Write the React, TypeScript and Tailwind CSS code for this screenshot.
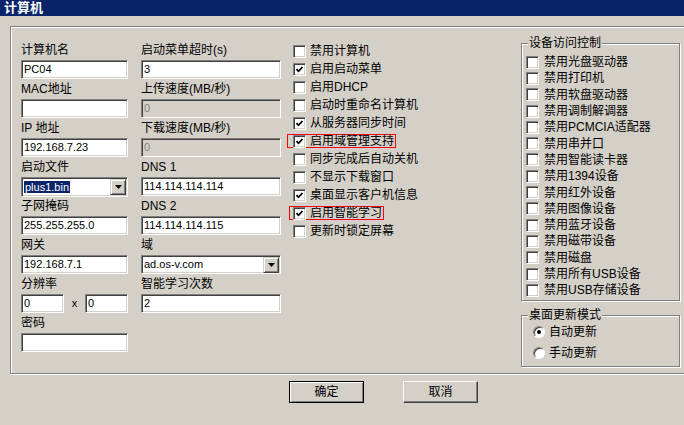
import React from 'react'

const sunken =
  'border border-t-[#808080] border-l-[#808080] border-b-white border-r-white shadow-[inset_1px_1px_0_#404040,inset_-1px_-1px_0_#d4d0c8]'

type FieldProps = {
  label: string
  value?: string
  disabled?: boolean
  select?: boolean
  selected?: boolean
}

const DropArrow = () => (
  <div className="w-[16px] h-[16px] flex items-center justify-center bg-[#d4d0c8] border border-t-[#d4d0c8] border-l-[#d4d0c8] border-b-[#404040] border-r-[#404040] shadow-[inset_1px_1px_0_white,inset_-1px_-1px_0_#808080]">
    <svg width="7" height="4" viewBox="0 0 7 4">
      <path d="M0 0H7L3.5 4Z" fill="black" />
    </svg>
  </div>
)

const Field = ({ label, value = '', disabled, select, selected }: FieldProps) => (
  <div className="flex flex-col">
    <div className="h-[20px] leading-[20px] text-[12px] text-black whitespace-nowrap">{label}</div>
    <div
      className={`h-[19px] flex items-center pl-[2px] pr-[1px] text-[11px] ${sunken} ${
        disabled ? 'bg-[#d4d0c8] text-[#808080]' : 'bg-white text-black'
      }`}
    >
      <span className={`flex-1 leading-[13px] ${selected ? '' : ''}`}>
        {selected ? <span className="bg-[#0a246a] text-white px-[1px]">{value}</span> : value}
      </span>
      {select && <DropArrow />}
    </div>
  </div>
)

const Check = ({ checked }: { checked?: boolean }) => (
  <div className={`w-[13px] h-[13px] shrink-0 bg-white flex items-center justify-center ${sunken}`}>
    {checked && (
      <svg width="9" height="9" viewBox="0 0 9 9">
        <path d="M1.5 4.2L3.5 6.3L7.5 2" stroke="black" strokeWidth="1.8" fill="none" />
      </svg>
    )}
  </div>
)

const Radio = ({ checked }: { checked?: boolean }) => (
  <div className="w-[12px] h-[12px] shrink-0 rounded-full bg-white flex items-center justify-center border border-t-[#808080] border-l-[#808080] border-b-white border-r-white shadow-[inset_1px_1px_0_#404040]">
    {checked && <div className="w-[4px] h-[4px] rounded-full bg-black" />}
  </div>
)

const options: [string, boolean, string?][] = [
  ['禁用计算机', false],
  ['启用启动菜单', true],
  ['启用DHCP', false],
  ['启动时重命名计算机', false],
  ['从服务器同步时间', true],
  ['启用域管理支持', true, '-ml-[6px] pl-[5px] pr-[1px]'],
  ['同步完成后自动关机', false],
  ['不显示下载窗口', false],
  ['桌面显示客户机信息', true],
  ['启用智能学习', true, '-ml-[4px] pl-[3px] pr-[1px]'],
  ['更新时锁定屏幕', false],
]

const devices = [
  '禁用光盘驱动器',
  '禁用打印机',
  '禁用软盘驱动器',
  '禁用调制解调器',
  '禁用PCMCIA适配器',
  '禁用串并口',
  '禁用智能读卡器',
  '禁用1394设备',
  '禁用红外设备',
  '禁用图像设备',
  '禁用蓝牙设备',
  '禁用磁带设备',
  '禁用磁盘',
  '禁用所有USB设备',
  '禁用USB存储设备',
]

export default function App() {
  return (
    <div className="w-[684px] h-[425px] overflow-hidden bg-[#d4d0c8] text-black font-['Liberation_Sans','Noto_Sans_CJK_SC',sans-serif]">
      {/* Title bar */}
      <div className="h-[16px] bg-[#0a246a] text-white font-bold text-[13px] leading-[16px] pl-[4px]">计算机</div>

      {/* Main panel */}
      <div className="ml-[10px] mt-[10px] h-[348px] border-t border-l border-b border-[#808080] shadow-[inset_1px_1px_0_white,0_1px_0_white] flex pl-[10px] pt-[13px]">
        {/* Left column */}
        <div className="w-[107px] flex flex-col">
          <Field label="计算机名" value="PC04" />
          <Field label="MAC地址" />
          <Field label="IP 地址" value="192.168.7.23" />
          <div className="flex flex-col">
            <div className="h-[20px] leading-[20px] text-[12px]">启动文件</div>
            <div className={`h-[20px] flex items-center pl-[2px] pr-[1px] text-[11px] bg-white ${sunken}`}>
              <span className="flex-1 leading-[13px]">
                <span className="bg-[#0a246a] text-white px-[1px]">plus1.bin</span>
              </span>
              <DropArrow />
            </div>
          </div>
          <div className="-mt-[1px]">
            <Field label="子网掩码" value="255.255.255.0" />
          </div>
          <Field label="网关" value="192.168.7.1" />
          <div className="flex flex-col">
            <div className="h-[20px] leading-[20px] text-[12px]">分辨率</div>
            <div className="flex items-center">
              <div className={`w-[43px] h-[19px] flex items-center pl-[2px] text-[11px] bg-white ${sunken}`}>0</div>
              <div className="flex-1 text-center text-[11px]">x</div>
              <div className={`w-[43px] h-[19px] flex items-center pl-[2px] text-[11px] bg-white ${sunken}`}>0</div>
            </div>
          </div>
          <Field label="密码" />
        </div>

        {/* Middle column */}
        <div className="w-[140px] ml-[13px] flex flex-col">
          <Field label="启动菜单超时(s)" value="3" />
          <Field label="上传速度(MB/秒)" value="0" disabled />
          <Field label="下载速度(MB/秒)" value="0" disabled />
          <Field label="DNS 1" value="114.114.114.114" />
          <Field label="DNS 2" value="114.114.114.115" />
          <Field label="域" value="ad.os-v.com" select />
          <Field label="智能学习次数" value="2" />
        </div>

        {/* Checkbox column */}
        <div className="w-[228px] ml-[12px] mt-[2px] flex flex-col">
          {options.map(([text, checked, red]) => (
            <div key={text} className="h-[18px] flex items-center">
              <div className={`h-[14px] flex items-center gap-[4px] ${red ? `border border-[#ff0000] ${red}` : ''}`}>
                <Check checked={checked} />
                <span className="text-[12px] leading-[14px] whitespace-nowrap">{text}</span>
              </div>
            </div>
          ))}
        </div>

        {/* Right column */}
        <div className="w-[159px] mt-[3px] flex flex-col">
          <div className="relative h-[258px] border border-[#808080] shadow-[1px_1px_0_white,inset_1px_1px_0_white] pt-[10px] pl-[4px]">
            <span className="absolute left-[6px] -top-[9px] bg-[#d4d0c8] px-[1px] text-[12px] leading-[16px]">设备访问控制</span>
            {devices.map((d) => (
              <div key={d} className="h-[16.3px] flex items-center gap-[5px]">
                <Check />
                <span className="text-[12px] leading-[14px] whitespace-nowrap">{d}</span>
              </div>
            ))}
          </div>
          <div className="relative mt-[14px] h-[52px] border border-[#808080] shadow-[1px_1px_0_white,inset_1px_1px_0_white] pt-[5px] pl-[11px]">
            <span className="absolute left-[6px] -top-[9px] bg-[#d4d0c8] px-[1px] text-[12px] leading-[16px]">桌面更新模式</span>
            <div className="h-[21px] flex items-center gap-[4px]">
              <Radio checked />
              <span className="text-[12px]">自动更新</span>
            </div>
            <div className="h-[21px] flex items-center gap-[4px]">
              <Radio />
              <span className="text-[12px]">手动更新</span>
            </div>
          </div>
        </div>
      </div>

      {/* Buttons */}
      <div className="flex pl-[289px] gap-[39px] mt-[7px]">
        <button className="w-[75px] h-[22px] bg-[#d4d0c8] text-[12px] border border-black shadow-[inset_1px_1px_0_white,inset_-1px_-1px_0_#808080]">
          确定
        </button>
        <button className="w-[75px] h-[22px] bg-[#d4d0c8] text-[12px] border border-t-white border-l-white border-b-[#404040] border-r-[#404040] shadow-[inset_-1px_-1px_0_#808080]">
          取消
        </button>
      </div>
    </div>
  )
}
